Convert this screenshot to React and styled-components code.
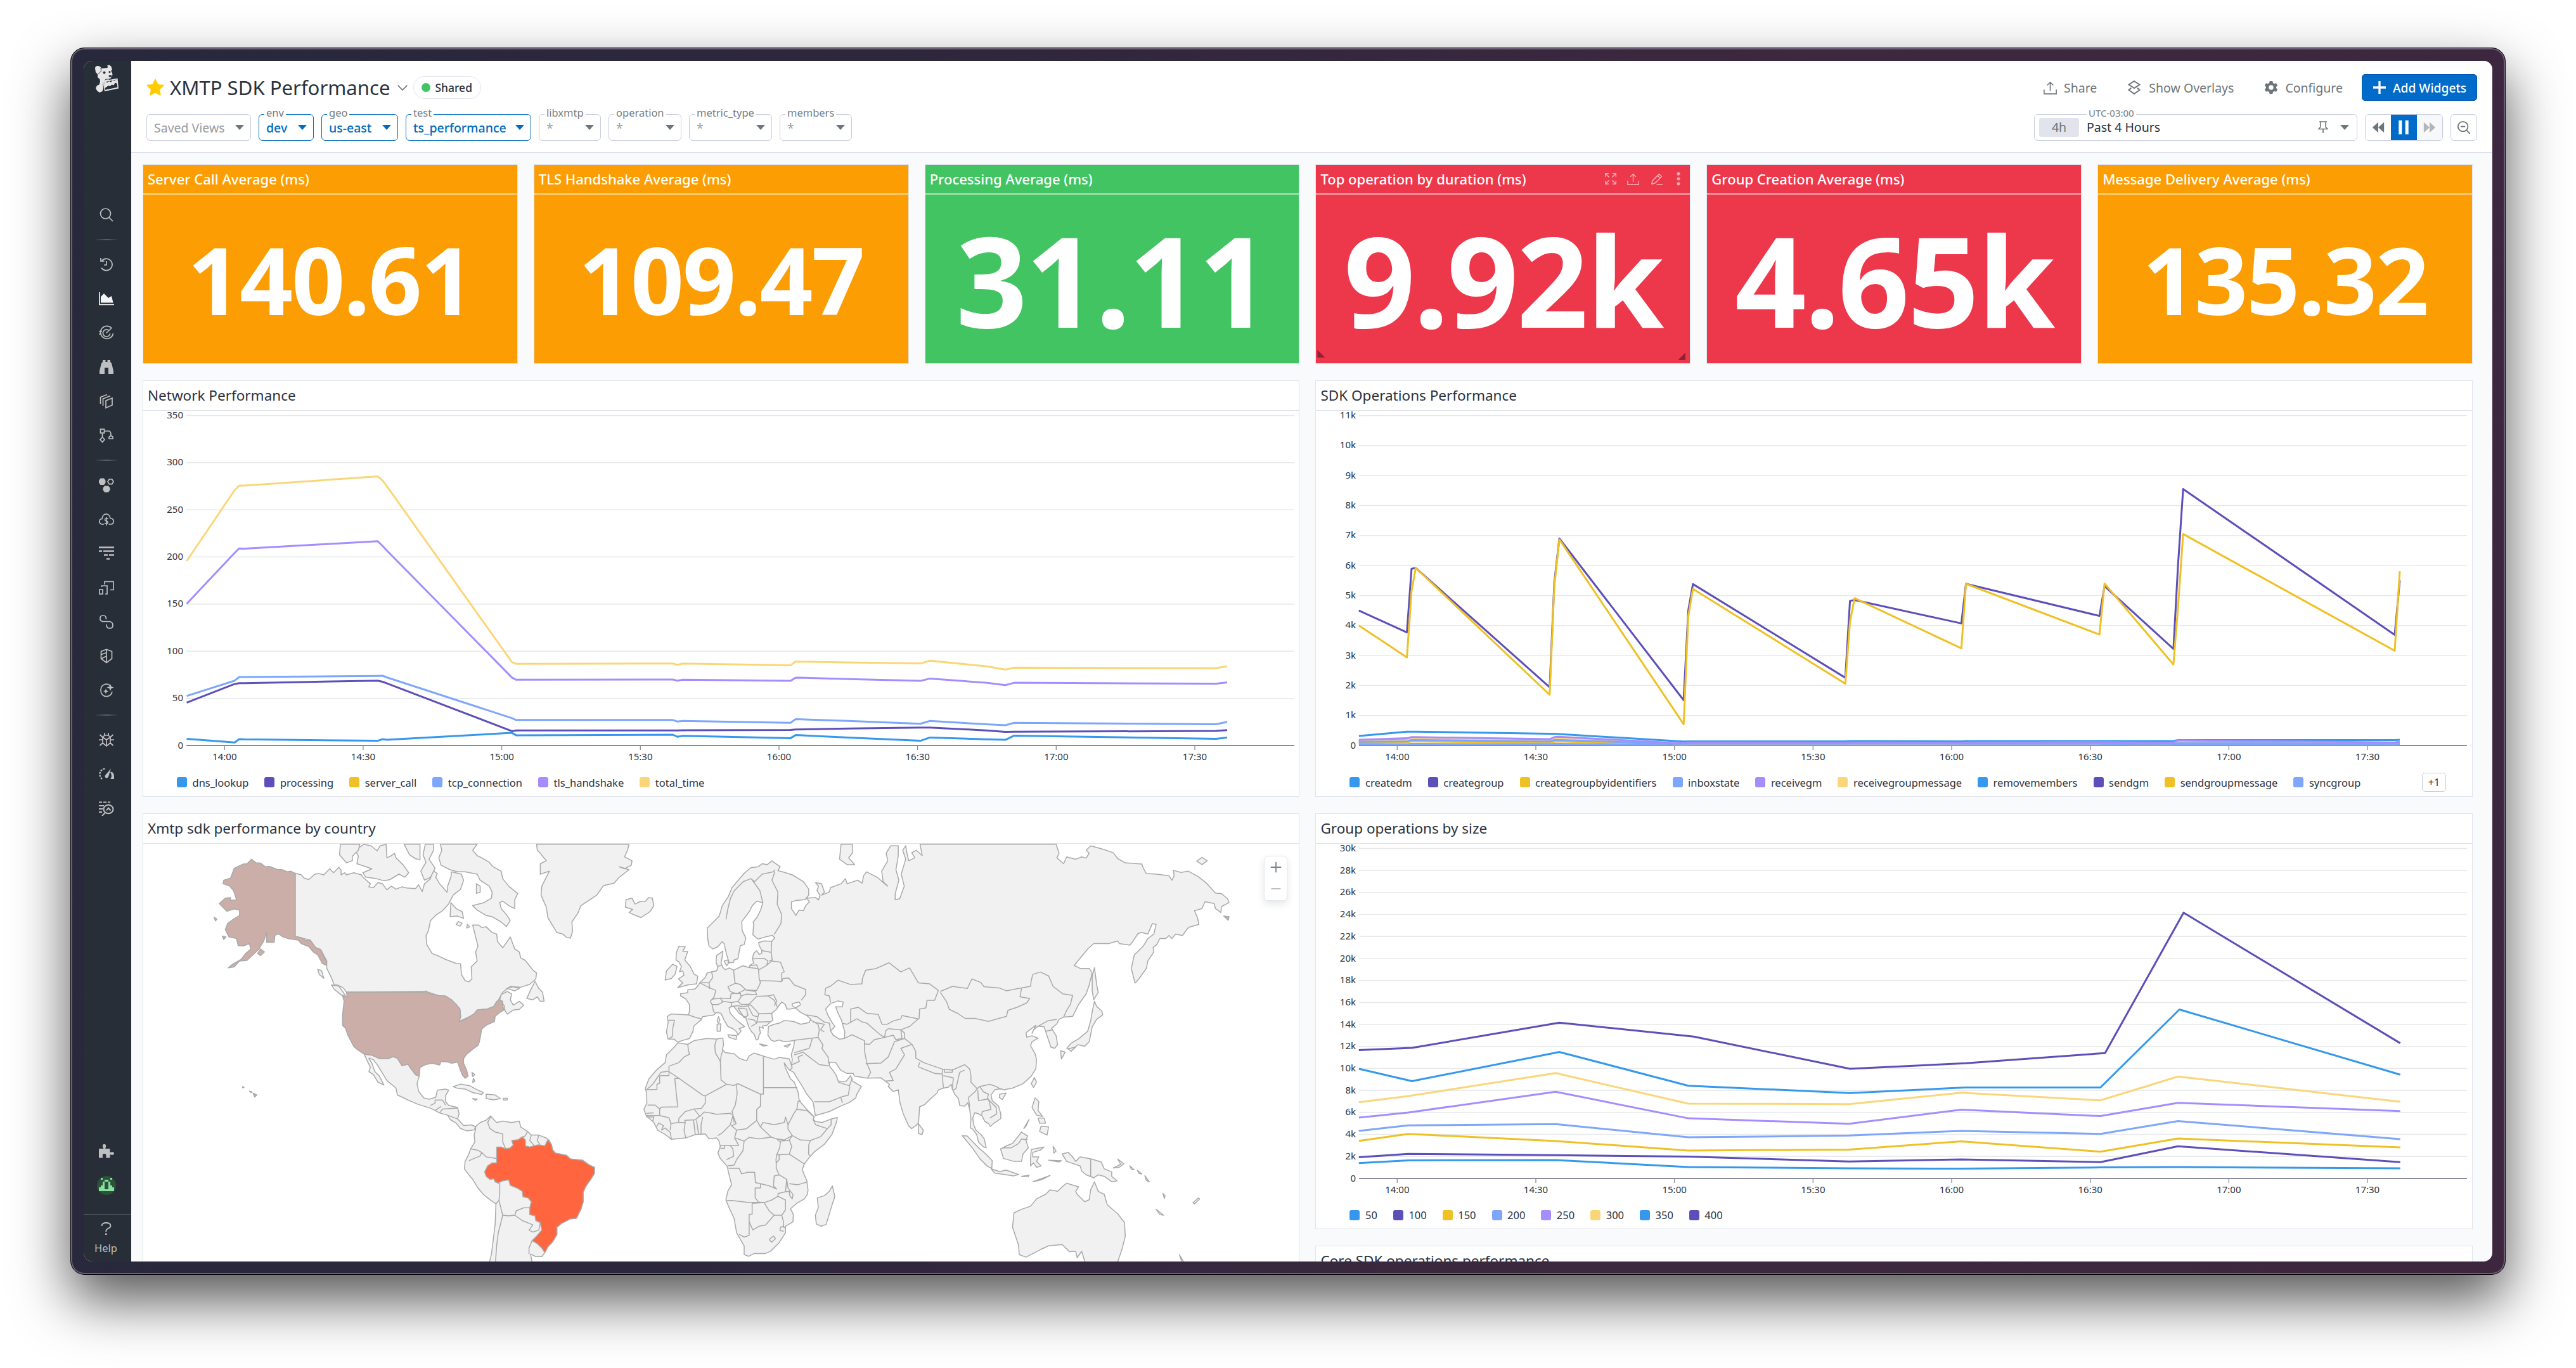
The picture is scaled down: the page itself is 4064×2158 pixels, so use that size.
import React from "react";
import styled, { createGlobalStyle } from "styled-components";

const Global = createGlobalStyle`
  html, body { margin: 0; padding: 0; background: #fff; }
  * { box-sizing: border-box; }
  body { font-family: "Noto Sans", "Open Sans", sans-serif; color: #2a323d; overflow: hidden; }
`;

/* ---------- shell ---------- */
const Desktop = styled.div`
  width: 4064px;
  height: 2158px;
  padding: 75px 111px 147px;
  background: #fff;
`;
const Bezel = styled.div`
  width: 3842px;
  height: 1936px;
  padding: 20px;
  border: 1px solid #050308;
  border-radius: 22px;
  background: linear-gradient(100deg, #28283c 0%, #2d273c 30%, #3c283f 65%, #3c273e 100%);
  box-shadow: inset 0 0 0 2px #6a6273, 0 40px 88px rgba(0, 0, 0, 0.67);
`;
const Screen = styled.div`
  display: grid;
  grid-template-columns: 75px 1fr;
  width: 3800px;
  height: 1894px;
  border-radius: 14px;
  overflow: hidden;
  background: #f9fafc;
`;

/* ---------- sidebar ---------- */
const Sidebar = styled.nav`
  display: flex;
  flex-direction: column;
  align-items: center;
  background: #282e38;
  color: #bdbfc0;
  padding-right: 3px;
`;
const LogoSlot = styled.div`
  height: 216px;
  padding-top: 6px;
`;
const NavItem = styled.div`
  height: 54px;
  width: 75px;
  display: flex;
  align-items: center;
  justify-content: center;
  color: ${(p) => (p.$active ? "#f4f4f4" : "inherit")};
`;
const NavRule = styled.div`
  width: 38px;
  height: 2px;
  margin: 11px 0;
  background: linear-gradient(90deg, transparent, #5b606a 50%, transparent);
`;
const Spacer = styled.div`
  flex: 1;
`;
const HelpBox = styled.div`
  width: 75px;
  margin-left: 3px;
  margin-top: 18px;
  height: 75px;
  border-top: 1px solid #575c65;
  padding: 12px 5px 0 0;
  display: flex;
  flex-direction: column;
  align-items: center;
  font-size: 16.5px;
  line-height: 22px;
`;
const HelpLabel = styled.span`
  margin-top: 10px;
`;

/* ---------- header ---------- */
const Main = styled.main`
  display: flex;
  flex-direction: column;
  min-width: 0;
  overflow: hidden;
`;
const Header = styled.header`
  flex: none;
  height: 145px;
  background: #fff;
  border-bottom: 1px solid #dcdfea;
  padding: 20px 24px 0;
  display: flex;
  flex-direction: column;
`;
const HeaderRow = styled.div`
  display: flex;
  align-items: center;
  height: ${(p) => p.$h}px;
  margin-top: ${(p) => p.$mt || 0}px;
`;
const Title = styled.h1`
  margin: 0 0 0 9px;
  font-size: 31.1px;
  font-weight: 400;
  line-height: 40px;
  white-space: nowrap;
`;
const ChevronSlot = styled.span`
  display: flex;
  margin-left: 12px;
`;
const Pill = styled.span`
  display: flex;
  align-items: center;
  gap: 7px;
  height: 36px;
  margin-left: 9px;
  padding: 0 13px 0 12px;
  border: 1px solid #e2e4ee;
  border-radius: 18px;
  font-size: 17.5px;
  font-weight: 500;
`;
const Dot = styled.i`
  width: 14px;
  height: 14px;
  border-radius: 50%;
  background: #42c463;
`;
const Ghost = styled.span`
  display: flex;
  align-items: center;
  gap: ${(p) => p.$gap || 11}px;
  margin-right: ${(p) => p.$mr}px;
  font-size: 19.5px;
  color: #6c757a;
  white-space: nowrap;
`;
const Primary = styled.span`
  display: flex;
  align-items: center;
  gap: 11px;
  width: 182px;
  height: 42px;
  padding-left: 17px;
  border: 1px solid #0259b5;
  border-radius: 5px;
  background: #006bc9;
  color: #fff;
  font-size: 19.2px;
  font-weight: 500;
  white-space: nowrap;
`;
const Filter = styled.div`
  position: relative;
  display: flex;
  align-items: center;
  justify-content: space-between;
  width: ${(p) => p.$w}px;
  height: 42px;
  margin-right: 12px;
  padding: 1px 10px 0 11px;
  border: 1px solid ${(p) => (p.$on ? "#006bc2" : "#c8cbe2")};
  border-radius: 6px;
  font-size: 19.5px;
  font-weight: ${(p) => (p.$on ? 500 : 400)};
  color: ${(p) => (p.$on ? "#006bc2" : "#979ba0")};
  white-space: nowrap;
`;
const Legendlet = styled.span`
  position: absolute;
  left: ${(p) => p.$x || 8}px;
  top: -14px;
  padding: 0 3px;
  background: #fff;
  color: #767d82;
  font-size: ${(p) => p.$s || 16.5}px;
  font-weight: 400;
  line-height: 22px;
`;
const Caret = styled.i`
  width: 0;
  height: 0;
  border: 7px solid transparent;
  border-bottom: 0;
  border-top: 8px solid ${(p) => p.$c || "#6c757a"};
`;
const TimeBox = styled.div`
  position: relative;
  display: flex;
  align-items: center;
  width: 510px;
  height: 42px;
  padding: 0 12px 0 7px;
  border: 1px solid #c8cbe2;
  border-radius: 6px;
  font-size: 19.5px;
`;
const PinSlot = styled.span`
  display: flex;
  margin-right: 19px;
`;
const Chip = styled.span`
  width: 63px;
  height: 30px;
  margin-right: 12px;
  border-radius: 4px;
  background: #e1e4ec;
  color: #6c757a;
  text-align: center;
  line-height: 30px;
`;
const Playback = styled.div`
  display: flex;
  width: 123px;
  height: 42px;
  margin: 0 12px;
  border: 1px solid #c8cbe2;
  border-radius: 6px;
  overflow: hidden;
`;
const PlayCell = styled.span`
  flex: 1;
  display: flex;
  align-items: center;
  justify-content: center;
  background: ${(p) => p.$bg || "#fff"};
  color: ${(p) => p.$c || "#6c757a"};
`;
const SquareButton = styled.span`
  display: flex;
  align-items: center;
  justify-content: center;
  width: 42px;
  height: 42px;
  border: 1px solid #c8cbe2;
  border-radius: 6px;
  color: #6c757a;
`;

/* ---------- board ---------- */
const Board = styled.section`
  display: grid;
  grid-template-columns: repeat(6, 1fr);
  grid-template-rows: 315px 656.5px 656.5px 656px;
  gap: 26px 25px;
  padding: 18px 31px 0 18px;
  height: 0;
`;
const Tile = styled.article`
  position: relative;
  display: flex;
  flex-direction: column;
  border: 1px solid #e1e4ee;
  background: ${(p) => p.$bg};
  color: #fff;
`;
const TileHead = styled.div`
  display: flex;
  align-items: center;
  justify-content: space-between;
  height: 47px;
  padding: 0 15px 1px 7px;
  border-bottom: 2px solid rgba(255, 255, 255, 0.6);
  font-size: 22px;
  font-weight: 500;
  white-space: nowrap;
`;
const TileTools = styled.span`
  display: flex;
  align-items: center;
  gap: 17.5px;
  color: #f9a9b2;
  > :last-child { margin-left: 5px; }
`;
const TileValue = styled.div`
  flex: 1;
  display: flex;
  align-items: center;
  justify-content: center;
  font-weight: 700;
  font-size: ${(p) => p.$size}px;
  letter-spacing: -0.0135em;
  line-height: 1;
`;
const Corner = styled.i`
  position: absolute;
  bottom: ${(p) => p.$b}px;
  left: ${(p) => (p.$left ? "2px" : "auto")};
  right: ${(p) => (p.$left ? "auto" : "7px")};
  width: 12px;
  height: 12px;
  background: #8f2035;
  clip-path: ${(p) => (p.$left ? "polygon(0 0, 100% 100%, 0 100%)" : "polygon(100% 0, 100% 100%, 0 100%)")};
`;
const Panel = styled.article`
  grid-column: span 3;
  grid-row: ${(p) => (p.$tall ? "span 2" : "auto")};
  position: relative;
  display: flex;
  flex-direction: column;
  min-width: 0;
  overflow: hidden;
  background: #fff;
  border: 1px solid #e1e4ec;
`;
const PanelHead = styled.h2`
  flex: none;
  margin: 0;
  height: 47px;
  padding: 0 7px;
  border-bottom: 1px solid #dfe2ea;
  font-size: 22.5px;
  font-weight: 400;
  line-height: 46px;
`;
const LegendRow = styled.div`
  display: flex;
  align-items: center;
  gap: 25px;
  margin-top: 10px;
  height: 30px;
  padding: 0 41px 0 53px;
  font-size: 16.5px;
  white-space: nowrap;
`;
const LegendItem = styled.span`
  display: flex;
  align-items: center;
  gap: 8.5px;
`;
const Swatch = styled.i`
  width: 16px;
  height: 16px;
  border-radius: 3px;
  background: ${(p) => p.$c};
`;
const More = styled.span`
  margin-left: auto;
  width: 38px;
  height: 30px;
  border: 1px solid #c8cbe2;
  border-radius: 5px;
  text-align: center;
  font-size: 16px;
  line-height: 28px;
`;
const ZoomBox = styled.div`
  position: absolute;
  top: 66px;
  right: 18px;
  width: 37px;
  height: 71px;
  border: 1px solid #e6e8f0;
  border-radius: 6px;
  background: #fff;
  box-shadow: 0 5px 12px rgba(40, 50, 80, 0.12);
  display: flex;
  flex-direction: column;
  align-items: center;
  justify-content: space-around;
  color: #7d8489;
`;
const PlotSvg = styled.svg`
  display: block;
  flex: none;
  overflow: visible;
`;

/* ---------- icons ---------- */
const IconSvg = styled.svg`
  display: block;
  flex: none;
`;
const Icon = ({ s = 24, sw = 1.7, children, vb = "0 0 24 24", w }) => (
  <IconSvg width={w || s} height={s} viewBox={vb} fill="none" stroke="currentColor" strokeWidth={sw}>
    {children}
  </IconSvg>
);
const solid = { fill: "currentColor", stroke: "none" };

const Logo = () => (
  <IconSvg width="38" height="44" viewBox="0 0 38 44" fill="#e6e6e6">
    <path d="M1 6 C1 3 3 1.5 6 2 C9 2.5 10 4 11 6 L20 5 L21.5 4 L20 1.5 L23.5 0.5 L26.5 3 L28 8.5 L26 9.5 C28 12 29 15 28 18 L25 22 L21 25 L16 25 L13 28 L13.5 33 L14 37 L12.5 42 L8 44 L4 41 L2 37 L4 33 L7.5 31.5 L9 27 L8.5 23 L5 20 L5 15 L2 12 Z" />
    <path fillRule="evenodd" d="M13 26 L36.5 21.5 L38 37.5 L16 42 Z M15.2 27.5 L17 39.8 L36.3 35.8 L35 23.5 Z" />
    <path d="M15.2 27.5 L18 26.8 L20 28.5 L23 26 L26 27.8 L29 24.5 L31 25.5 L35 23.5 L35.8 30 L32.5 28.5 L30.5 32.5 L27.5 31.5 L24.5 34 L22 33 L16.5 37Z" />
    <path d="M9.5 5 C12 9 9.5 13 6 14" stroke="#282e38" fill="none" strokeWidth="0.9" />
    <circle cx="15.5" cy="12.5" r="2" fill="#282e38" />
    <circle cx="24" cy="11.5" r="1.6" fill="#282e38" />
    <ellipse cx="25" cy="18" rx="2.6" ry="1.8" fill="#282e38" />
    <path d="M17 23.5 L24 22.5" stroke="#282e38" strokeWidth="0.9" />
  </IconSvg>
);

const icons = {
  search: <Icon><circle cx="10.5" cy="10" r="8" /><path d="M16 16 L22 22" /></Icon>,
  history: <Icon><path d="M4.5 6.5 A9.3 9.3 0 1 1 4 17.5" /><path d="M3 2 V7 H8.5 M12 7 V13 H8" /></Icon>,
  chart: <Icon><path d="M1 2 V21.5 H24" /><path {...solid} d="M3 18.5 V9 L8 4 L15 11 L20 8 L22.5 18.5 Z" /></Icon>,
  target: <Icon><path d="M20 4.5 A10 10 0 1 0 22.5 13" /><path d="M16 8.5 A5.6 5.6 0 1 0 17.6 13" /><path d="M11.5 12.5 L20 4.5 M0 9.5 H5 M0 14 H4" /></Icon>,
  binoc: <Icon><path {...solid} d="M6 1 H10.5 V4 H13.5 V1 H18 V4 L20 6 L23 18 V23 H15 V13 H9 V23 H1 V18 L4 6 L6 4Z" /></Icon>,
  stack: <Icon><path d="M11 11 L21 7 V18 L11 22.5Z" /><path d="M6.5 19 V8 L18 3.5 M2.5 16 V5.5 L13 1.5" /></Icon>,
  flow: <Icon><rect x="2.5" y="2" width="6" height="6" /><path d="M5.5 8 V15 M5.5 14.5 L9 18.5 L5.5 22.5 L2 18.5Z M8.5 5 H16 Q19 5 19 12" /><path d="M16 17 A3.2 3.2 0 1 1 22 17 Z" /></Icon>,
  hex: <Icon><path {...solid} d="M0 5 L2.5 1.5 H8 L10.5 5 V8.5 L8 12 H2.5 L0 8.5Z M6.5 16.5 L9 13.5 H15 L17.5 16.5 V20 L15 23.5 H9 L6.5 20Z" /><path d="M14 6.8 L16.3 3 H20.7 L23 6.8 L20.7 10.6 H16.3Z" /></Icon>,
  cloud: <Icon><path d="M8 20 H5 C-1 19 0 11.5 5 11.5 C5.5 2 16.5 1 18 10.5 C25 11 24.5 20 19 20 H15.5" /><path d="M14.5 11.5 C11 9.5 8.5 12 10 14 C12 15.5 15 15.5 14 18 C13 19.5 10 19 9 18 M11.8 8.8 V22" strokeWidth="1.6" /></Icon>,
  lines: <Icon sw="2.4"><path d="M0 2.5 H24 M0 8.5 H5 M7 8.5 H24 M8 14.5 H14 M16 14.5 H24 M12 20.5 H17" /></Icon>,
  boxes: <Icon><rect x="1" y="15" width="5" height="7" /><path d="M4.5 11 V9 H13 V22 H10 M9 7 V2.5 H23 V15.5 H18" /></Icon>,
  link: <Icon><path d="M9 11.5 H6 C0.5 10.5 0.5 2.5 6 2 H7.5 C11.5 2 11.5 7 11.5 8 M4.5 11.5 H17 C23.5 12.5 23.5 21.5 18 22 H16 C12 22 12 18 12 16" /></Icon>,
  shield: <Icon><path d="M3.5 4.5 L12 1.5 L20.5 4.5 V16 L12 22.5 L3.5 16Z M12 1.5 V22.5 M4 9.5 L12 6.5 M4 16 L12 12" /></Icon>,
  ai: <Icon><path d="M19 6 C13 -1 3 2.5 3 12 C3 24 19 25 21 14" /><path {...solid} d="M18 2 L19.5 6 L23.5 7.5 L19.5 9 L18 13 L16.5 9 L12.5 7.5 L16.5 6Z M11 9.5 L12.2 12.3 L15 13.5 L12.2 14.7 L11 17.5 L9.8 14.7 L7 13.5 L9.8 12.3Z" /></Icon>,
  bug: <Icon><path d="M6 8 L12 12 L18 8 M12 12 V22 M6 8 V17 L12 22 L18 17 V8 L15 5 H9Z M9 5 V1 M15 5 V1 M0 12 H6 M18 12 H24 M6 8 L1.5 4 M18 8 L22.5 4 M6 17 L1.5 21 M18 17 L22.5 21" /></Icon>,
  gauge: <Icon><path d="M5 20 C-2 13 2 4 11 3.5" strokeDasharray="3 1.6" strokeWidth="2.2" /><path {...solid} d="M10 14 L19 3.5 L15 16.5 C13 20 8 18 10 14Z M18 9 C22 8 24 12 24 16 V20 H18 C21 17 20 12 18 9Z" /></Icon>,
  logs: <Icon><path d="M0 2.5 H5 M7 2.5 H12 M14 2.5 H18 M0 8 H8 M0 13 H6 M0 18 H5" strokeWidth="2" /><ellipse cx="15" cy="13.5" rx="7.5" ry="6.8" strokeWidth="2" /><path d="M10 19 L5 24 M12 15.5 L15 11.5 L18.5 15.5" strokeWidth="2" /></Icon>,
  puzzle: <Icon><path {...solid} d="M0 8 H7.5 C5 3.5 5.5 1 8.5 1 C11.5 1 12 3.5 10 8 H17.5 V14 C21 12.5 24 13 24 15.5 C24 18 21 18.5 17.5 17 V22.5 H11 C12.5 18 11 16 8.5 16 C6 16 5 18 6.5 22.5 H0Z" /></Icon>,
};

const Avatar = () => (
  <IconSvg width="30" height="30" viewBox="0 0 30 30" shapeRendering="crispEdges">
    <circle cx="15" cy="15" r="15" fill="#2c5337" shapeRendering="auto" />
    <path fill="#86e0a0" d="M6 3h3v3H6z M21 3h3v3h-3z M12 6h6v3h3v6h3v3h3v6h-9v-3h-6v3H3v-6h3v-3h3V9h3z" />
    <path d="M12 9h6v12h-6z" fill="#2c5337" />
    <path d="M12 21h6v3h-6z" fill="#86e0a0" />
  </IconSvg>
);

const ShareIcon = ({ s }) => (
  <Icon s={s} sw="1.8"><path d="M1 15 V23 H23 V15 M12 18 V2 M6.5 7.5 L12 2 L17.5 7.5" /></Icon>
);

/* ---------- charts ---------- */
const C = { blue: "#3598ec", purple: "#5d4fba", gold: "#efc124", sky: "#7ea6fb", lilac: "#a58dff", sand: "#fbd679" };
const CHART_W = 1823;
const X0 = 68;
const X1 = 1816;
const Y_TOP = 7.5;
const Y_BASE = 528;
const TIMES = ["14:00", "14:30", "15:00", "15:30", "16:00", "16:30", "17:00", "17:30"];

function Chart({ ticks, max, series, label }) {
  const x = (m) => 128.3 + m * 7.289;
  const y = (v) => Y_BASE - (v / max) * (Y_BASE - Y_TOP);
  return (
    <PlotSvg width={CHART_W} height="561" viewBox={`0 0 ${CHART_W} 561`}>
      {ticks.map((t) => (
        <g key={t}>
          {t > 0 && <line x1={X0} x2={X1} y1={y(t)} y2={y(t)} stroke="#e7e8ea" strokeWidth="1.5" />}
          <text x="63" y={y(t) + 4.5} fontSize="15" textAnchor="end" fill="#2a323d">{label(t)}</text>
        </g>
      ))}
      <line x1={X0} x2={X1} y1={Y_BASE} y2={Y_BASE} stroke="#8a8c9b" strokeWidth="2" />
      {TIMES.map((t, i) => (
        <g key={t}>
          <line x1={x(i * 30)} x2={x(i * 30)} y1={Y_BASE} y2={Y_BASE + 7} stroke="#8a8c9b" strokeWidth="1.3" />
          <text x={x(i * 30)} y={Y_BASE + 23} fontSize="15" textAnchor="middle" fill="#2a323d">{t}</text>
        </g>
      ))}
      {series.map(([color, pts], i) => (
        <polyline key={i} fill="none" stroke={color} strokeWidth="3" strokeLinejoin="round" points={pts.map(([m, v]) => `${x(m).toFixed(1)},${y(v).toFixed(1)}`).join(" ")} />
      ))}
    </PlotSvg>
  );
}

const zip = (ms, vs) => ms.map((m, i) => [m, vs[i]]);
const NM = [-8.2, 2.2, 3.15, 4.3, 33.15, 34.2, 35.1, 62.2, 63.1, 97, 98, 99.2, 122.5, 123.6, 135, 150.6, 152.7, 164.8, 169, 170.9, 214.6, 217];
const network = [
  [C.sand, zip(NM, [195.7, 271, 275.6, 275.6, 285.5, 281, 275.3, 88.4, 86.6, 86.9, 85.5, 86.9, 85, 89, 88, 87, 90, 84, 80.5, 82.5, 82, 84])],
  [C.lilac, zip(NM, [150.3, 204.4, 209, 208.8, 216.7, 211.7, 207, 72, 69.7, 70, 68.8, 69.7, 68.5, 72, 70.5, 68.5, 71, 66.5, 64, 66.5, 65.5, 67])],
  [C.sky, zip(NM, [52.5, 68.8, 72.6, 72.6, 73.8, 74, 72.3, 29, 27, 27, 25.4, 26, 24, 28, 26, 23, 26, 22.5, 21.5, 24, 22.5, 25])],
  [C.purple, zip(NM, [45.5, 65.3, 66, 66.1, 68.8, 67.6, 66, 15.2, 16, 16, 16, 16.2, 16.5, 17, 18, 19, 19, 16, 14.5, 14.6, 15.4, 16.3])],
  [C.blue, zip(NM, [7, 3.2, 6.7, 6.5, 5, 6.7, 6.1, 13.4, 10.8, 11.4, 9.3, 10.2, 7.8, 11, 8.5, 5, 8.5, 6.5, 6, 10.5, 7, 8.5])],
];

const SM = [-8.3, 2.1, 3.1, 4, 33, 34, 35.1, 62, 63, 64, 97, 98, 99, 122.1, 123.1, 152, 153.1, 168, 169, 170.1, 215.9, 217];
const sdk = [
  [C.gold, zip(SM, [0.09, 0.11, 0.13, 0.13, 0.09, 0.12, 0.13, 0.02, 0.03, 0.04, 0.03, 0.03, 0.04, 0.03, 0.04, 0.04, 0.04, 0.03, 0.05, 0.05, 0.04, 0.05])],
  [C.sky, zip(SM, [0.04, 0.04, 0.05, 0.05, 0.04, 0.05, 0.05, 0.02, 0.03, 0.03, 0.03, 0.03, 0.03, 0.03, 0.03, 0.03, 0.03, 0.02, 0.03, 0.03, 0.03, 0.04])],
  [C.purple, zip(SM, [0.16, 0.2, 0.22, 0.22, 0.17, 0.2, 0.21, 0.05, 0.07, 0.07, 0.07, 0.07, 0.08, 0.07, 0.08, 0.08, 0.08, 0.06, 0.1, 0.1, 0.08, 0.1])],
  [C.sand, zip(SM, [0.15, 0.18, 0.22, 0.23, 0.16, 0.22, 0.23, 0.05, 0.06, 0.07, 0.06, 0.06, 0.07, 0.06, 0.07, 0.07, 0.08, 0.06, 0.13, 0.14, 0.07, 0.1])],
  [C.sky, zip(SM, [0.12, 0.14, 0.18, 0.18, 0.13, 0.18, 0.18, 0.05, 0.06, 0.07, 0.06, 0.06, 0.07, 0.06, 0.07, 0.07, 0.07, 0.05, 0.08, 0.08, 0.06, 0.08])],
  [C.blue, zip(SM, [0.32, 0.46, 0.46, 0.46, 0.39, 0.39, 0.38, 0.13, 0.14, 0.14, 0.14, 0.15, 0.15, 0.14, 0.15, 0.15, 0.15, 0.15, 0.18, 0.18, 0.18, 0.19])],
  [C.lilac, zip(SM, [0.19, 0.24, 0.28, 0.28, 0.21, 0.28, 0.29, 0.07, 0.1, 0.1, 0.09, 0.1, 0.1, 0.09, 0.1, 0.11, 0.11, 0.09, 0.17, 0.17, 0.1, 0.13])],
  [C.purple, zip(SM, [4.5, 3.77, 5.89, 5.92, 1.94, 5.42, 6.9, 1.51, 4.5, 5.38, 2.26, 4.82, 4.85, 4.07, 5.39, 4.32, 5.31, 3.22, 6, 8.55, 3.69, 5.51])],
  [C.gold, zip(SM, [4.0, 2.94, 5.14, 5.92, 1.69, 5.3, 6.87, 0.71, 4.3, 5.22, 2.06, 4.13, 4.91, 3.24, 5.39, 3.7, 5.4, 2.7, 4.6, 7.05, 3.16, 5.81])],
];

const GM = [-8.3, 2.4, 34.3, 63, 97.8, 122.1, 152.2, 169, 217.1];
const GL = [-8.3, 3.2, 35.1, 64.2, 98, 123, 153.2, 170.2, 217.1];
const GB = [-8.3, 3.2, 35.1, 63, 98, 123, 152.2, 169.3, 217.1];
const groups = [
  [C.blue, zip(GM, [1.4, 1.65, 1.68, 1.03, 0.92, 0.89, 1, 1.03, 0.92])],
  [C.purple, zip(GM, [1.93, 2.23, 2.12, 1.98, 1.54, 1.73, 1.48, 2.93, 1.48])],
  [C.gold, zip(GM, [3.41, 4.05, 3.4, 2.54, 2.63, 3.38, 2.43, 3.63, 2.82])],
  [C.sky, zip(GM, [4.33, 4.83, 4.94, 3.74, 3.9, 4.33, 4.05, 5.22, 3.58])],
  [C.lilac, zip(GM, [5.53, 6, 7.88, 5.47, 4.97, 6.26, 5.67, 6.87, 6.12])],
  [C.sand, zip(GM, [6.93, 7.49, 9.58, 6.8, 6.76, 7.8, 7.1, 9.27, 6.98])],
  [C.blue, zip(GB, [9.97, 8.85, 11.5, 8.43, 7.77, 8.27, 8.27, 15.36, 9.44])],
  [C.purple, zip(GL, [11.68, 11.87, 14.16, 12.9, 9.97, 10.47, 11.4, 24.16, 12.3])],
];

/* ---------- map ---------- */
const pts = (str, ox, oy, kx, ky) =>
  str.trim().split(/\s+/).map((p) => {
    const [px, py] = p.split(",").map(Number);
    return `${(ox + px * kx).toFixed(1)},${(oy + py * ky).toFixed(1)}`;
  });
/* wide sheet (whole world) and detail sheet (Europe, Africa, South Asia) */
const W = (s) => pts(s, -26, -60.5, 1.18622, 0.47192);
const D = (s) => pts(s, 774, 119.5, 0.39541, 0.34436);
const ring = (...parts) => parts.flat().join(" ");

const eurasia = ring(
  W("772,410 780,390 788,370 792,335 800,305 805,275 815,245 822,225 830,208 840,205 845,195 852,198 858,185 866,200 869,205 866,218 872,222 885,232 900,255 907,280 907,300 902,315 890,318 884,322 884,345 890,368 894,350 900,352 903,335 908,322 904,310 916,308 920,316 922,300 918,285 920,270 916,258 924,262 928,290 924,300 934,290 936,275 950,262 956,245 958,262 972,250 978,260 980,235 984,222 998,240 1008,262 1012,270 1006,255 1004,220 1012,185 1010,160 1016,135 1026,135 1026,170 1023,215 1027,250 1022,295 1022,315 1028,312 1034,270 1030,230 1036,180 1032,150 1036,135 1038,165 1040,185 1048,175 1044,158 1050,150 1058,168 1055,130 1236,130 1240,160 1237,175 1246,195 1250,172 1262,180 1270,172 1276,176 1280,160 1276,150 1282,135 1300,148 1312,158 1318,178 1328,192 1350,196 1352,210 1356,228 1370,230 1386,235 1390,250 1393,235 1392,217 1402,224 1412,220 1425,238 1436,260 1448,293 1456,295 1464,312 1466,325 1456,338 1455,358 1448,345 1446,328 1434,322 1430,345 1420,352 1424,375 1426,398 1412,408 1404,435 1395,430 1390,445 1386,435 1382,445 1374,445 1370,465 1365,475 1366,490 1358,520 1356,545 1346,580 1341,594 1336,545 1340,500 1352,470 1358,445 1366,430 1369,398 1364,395 1358,430 1350,425 1345,428 1338,455 1334,467 1320,462 1318,453 1306,462 1286,462 1278,480 1260,535 1268,545 1280,545 1284,560 1280,600 1276,630 1266,665 1258,705 1246,708 1240,715 1237,730 1230,745 1236,770 1238,800 1234,812 1229,808 1226,785 1224,770 1222,755 1220,740 1212,738 1206,750 1204,762 1209,735 1196,760 1197,775 1204,770 1212,778 1204,790 1202,803 1208,830 1210,850 1209,880 1203,905 1192,930 1178,945 1168,950"),
  D("1480,782 1465,775 1440,780 1425,805 1430,830 1455,855 1464,890 1464,912 1440,930 1422,948 1416,935 1400,925 1390,900 1375,890 1360,885 1352,910 1356,940 1365,965 1385,985 1398,1005 1406,1045 1395,1042 1375,1020 1368,985 1352,960 1342,955 1345,915 1340,870 1332,840 1320,855 1300,852 1295,820 1280,800 1272,780 1266,755 1255,768 1238,772 1215,780 1210,795 1180,825 1160,848 1140,858 1136,930 1125,945 1108,958 1096,945 1075,890 1062,840 1055,780 1035,788 1015,765 1020,755 1003,740 985,725 930,727 880,717 875,705 850,705 825,690 805,655 780,653 780,670 800,700 808,715 815,740 835,742 848,740 865,715 872,740 908,765 890,800 885,818 860,838 825,855 780,880 724,898 720,870 715,835 690,800 670,760 650,725 638,700 622,690 628,680 632,640 628,620 638,580 641,553 625,557 600,560 580,552 560,558 548,553 535,530 537,490 560,480 580,475 600,463 620,465 640,468 665,480 700,472 705,455 690,440 665,425 645,405 625,410 610,410 605,390 590,378 575,400 570,410 550,430 552,450 555,462 545,468 530,485 513,488 517,498 500,492 505,520 500,530 495,550 488,552 480,525 470,515 460,495 452,470 447,450 420,430 400,400 390,398 380,405 385,430 405,455 425,475 442,490 432,495 420,500 428,510 415,530 410,515 395,500 375,490 360,460 348,430 330,425 320,437 275,445 268,460 240,487 235,515 222,545 200,552 175,562 160,548 136,547 130,515 137,470 133,445 148,433 218,437 222,420 222,390 208,365 187,350 186,340 215,335 215,322 245,318 258,300 263,290 285,265 292,245 310,240 330,235 335,220 328,195 330,165 355,145 352,175 348,200 355,220 365,230 380,222 398,232 435,212 460,220 465,208 478,200 473,180 478,155 490,143 500,160 510,155 510,140 500,120 498,105 520,98 550,100 562,85 553,73 530,78 495,90 475,70 478,20"),
  W("833,390 838,375 843,350 846,325 838,320 832,335 828,355 818,388"),
  D("432,50 447,85 440,115 425,120 418,160 415,180 400,185 397,197 380,198 370,160 360,110 352,102 335,125 315,135 300,122 295,90")
);

const LANDS = [
  ring(W("224,227 232,232 236,243 242,248 250,230 256,228 262,232 270,212 275,225 282,207 285,216 285,232 290,225 292,232 302,225 312,232 314,240 324,262 322,272 328,275 334,258 340,262 346,282 352,270 358,280 366,272 372,276 384,278 388,265 393,288 396,262 404,245 406,215 413,228 411,240 416,262 426,290 427,268 431,240 432,222 445,230 448,250 444,280 434,300 428,330 420,352 412,365 404,385 401,420 398,435 399,465 406,495 416,505 424,515 438,528 444,530 445,565 450,586 455,590 459,580 458,540 466,520 464,490 467,470 463,430 460,400 468,400 472,408 478,406 486,425 492,430 493,455 500,476 506,455 510,440 516,480 522,490 524,510 530,518 540,550 545,560 544,580 536,598 524,608 510,605 500,625 494,652 488,672 480,680 466,684 462,697 456,706 442,722 444,706 443,680 432,650 415,636 398,622 292,624 288,610 280,600 276,600 272,575 266,545 266,520 258,482 251,475 244,450 224,438")),
  ring(W("496,650 498,632 506,622 512,630 510,650 514,668 522,655 528,668 522,682 514,684 506,698 503,686 502,670")),
  ring(W("505,612 514,606 522,612 516,620")),
  ring(W("543,588 548,612 553,625 555,655 550,655 546,640 540,650 532,645 537,618")),
  ring(W("272,600 282,604 288,625 292,642 286,635 276,615")),
  ring(W("254,548 259,552 262,578 256,565")),
  ring(W("315,130 325,135 333,152 337,135 345,130 346,175 352,168 356,160 358,175 368,200 375,225 370,240 362,230 350,248 342,252 332,245 318,240 314,225 326,212 318,205 306,195 308,170 304,150")),
  ring(W("284,130 310,130 308,150 300,170 300,185 292,192 283,165")),
  ring(W("369,130 376,165 384,178 390,182 390,130")),
  ring(W("397,130 408,130 408,150 402,180 410,210 404,240 396,250 391,220 398,190 394,165")),
  ring(W("417,130 466,130 460,150 466,168 472,175 482,190 487,205 498,220 500,245 508,270 520,295 516,315 516,345 508,335 500,320 496,325 498,345 505,365 510,385 505,405 498,390 486,372 478,368 466,350 460,335 475,325 485,310 486,290 482,270 470,250 466,230 450,222 440,222 430,215 418,200 415,175 419,150")),
  ring(W("431,325 438,345 446,355 448,378 440,370 430,372")),
  ring(W("465,262 470,270 470,290 465,294")),
  ring(W("441,388 446,394 443,404 438,398")),
  ring(W("453,398 456,406 452,410")),
  ring(W("545,130 668,130 666,150 662,172 672,185 671,200 662,212 655,205 668,215 655,240 648,260 634,268 625,300 604,335 600,360 592,390 593,420 590,444 584,440 580,430 572,425 566,400 560,375 558,340 551,300 552,270 558,240 562,220 550,230 550,195 558,185 553,170 550,160 546,150")),
  ring(W("664,315 672,310 676,330 682,322 690,320 694,308 699,310 701,335 696,355 684,375 674,365 668,358 673,348 663,340")),
  ring(W("316,832 326,835 336,846 348,846 354,840 360,845 366,870 374,865 378,880 384,900 389,905 386,930 388,955 395,978 402,982 411,976 413,952 424,948 428,952 424,970 424,990 428,1003 440,1010 442,1030 440,1048 448,1070 458,1068 464,1074 462,1085 452,1088 444,1080 438,1062 430,1050 427,1036 416,1028 404,1012 388,1000 374,985 360,968 358,945 346,920 340,895 334,870 328,850 322,845 326,862 330,890 336,905 342,935 334,925 328,900 322,890 324,875 319,850")),
  ring(W("434,940 444,932 456,937 464,948 474,960 472,966 460,960 450,948 440,946")),
  ring(W("478,965 490,968 497,980 488,984 478,980")),
  ring(W("501,979 506,979 506,985 501,985")),
  ring(W("460,980 466,982 464,986")),
  ring(W("459,892 463,900 460,906")),
  ring(W("461,912 463,922 460,926")),
  ring(W("464,1074 470,1060 478,1052 484,1038 488,1050 492,1060 500,1055 512,1060 522,1055 524,1075 533,1090 538,1102 548,1102 558,1112 562,1120 565,1135 566,1150 570,1162 585,1170 590,1182 606,1186 615,1202 622,1210 622,1230 617,1250 610,1275 607,1295 607,1325 604,1350 598,1380 590,1382 578,1398 572,1410 572,1435 566,1460 560,1475 556,1495 552,1508 544,1508 537,1500 540,1540 481,1540 485,1500 487,1460 490,1400 491,1332 484,1320 474,1300 466,1275 460,1250 455,1235 449,1215 450,1190 455,1165 457,1150 463,1125 462,1100 464,1085")),
  eurasia,
  ring(D("175,565 215,572 240,555 290,545 330,547 355,543 358,575 353,595 365,610 400,615 420,635 450,648 460,625 480,612 515,625 535,632 560,640 580,632 620,638 632,680 620,690 600,657 605,680 625,730 640,745 655,790 660,830 690,870 720,905 715,915 725,925 750,930 785,915 812,907 808,930 790,985 760,1030 720,1065 700,1090 680,1120 672,1145 680,1170 690,1195 695,1240 692,1260 680,1280 650,1300 625,1325 636,1350 635,1385 605,1405 605,1435 580,1480 545,1520 525,1530 480,1530 458,1543 440,1535 440,1495 410,1435 400,1370 380,1320 367,1285 375,1245 390,1215 380,1170 372,1130 345,1095 335,1070 345,1040 340,1015 330,1000 300,1005 285,982 245,985 210,1000 150,1007 125,985 95,965 80,930 50,900 40,870 52,840 50,790 45,775 60,730 90,690 125,655 130,620 165,580")),
  ring(D("792,1220 802,1270 790,1310 767,1397 747,1405 728,1395 724,1355 736,1320 732,1275 760,1265 780,1245")),
  ring(D("180,122 205,125 195,145 215,147 203,185 225,215 240,250 255,260 250,295 215,300 175,312 195,290 178,272 200,255 195,235 182,240 190,215 180,195 168,185 170,150")),
  ring(D("155,205 172,215 165,250 150,270 125,277 130,235")),
  ring(D("338,445 343,460 338,475 332,465")),
  ring(D("332,480 347,478 345,512 332,512")),
  ring(D("375,528 410,532 408,550 380,540")),
  ring(D("502,570 532,577 515,580")),
  ring(D("600,580 625,570 612,585")),
  ring(D("360,190 375,185 378,200 370,212")),
  ring(D("1135,935 1155,965 1150,985 1135,980")),
  ring(D("1460,800 1485,795 1470,825 1458,815")),
  ring(D("1310,990 1330,992 1375,1045 1405,1075 1430,1105 1428,1140 1410,1130 1380,1095 1350,1045")),
  ring(D("1425,1142 1460,1155 1485,1148 1535,1168 1515,1175 1440,1162")),
  ring(W("1190,1092 1198,1105 1196,1120 1199,1145 1192,1165 1190,1190 1180,1190 1166,1180 1162,1148 1170,1138 1178,1130")),
  ring(W("1207,910 1210,925 1206,943 1203,930")),
  ring(W("1287,543 1290,600 1292,625 1286,650 1284,620 1284,570")),
  ring(W("1287,655 1290,672 1297,688 1298,700 1290,715 1284,740 1280,790 1274,805 1265,800 1258,815 1250,812 1256,795 1266,780 1278,755 1282,720 1284,690")),
  ring(W("1242,820 1248,825 1243,848")),
  ring(W("1252,814 1262,808 1256,822")),
  ring(W("1208,978 1213,990 1212,1020 1218,1040 1210,1035 1204,1010")),
  ring(W("1216,1072 1226,1075 1224,1102 1214,1090")),
  ring(W("1212,1045 1220,1045 1222,1062 1214,1062")),
  ring(W("1200,1050 1196,1072 1193,1080")),
  ring(W("1203,1150 1220,1142 1215,1152 1205,1160 1205,1175 1213,1175 1210,1190 1216,1205 1210,1210 1206,1195 1202,1205 1202,1180")),
  ring(W("1244,1165 1252,1160 1258,1175 1262,1190 1268,1175 1283,1182 1296,1192 1300,1215 1310,1225 1310,1240 1317,1255 1310,1258 1300,1240 1292,1235 1286,1245 1276,1235 1270,1222 1268,1205 1250,1190")),
  ring(W("1318,1182 1326,1198 1320,1210 1312,1212 1322,1200")),
  ring(W("1334,1205 1340,1218 1336,1216")),
  ring(W("1344,1220 1350,1232 1346,1230")),
  ring(W("1354,1238 1360,1258 1356,1254")),
  ring(W("1205,1258 1228,1237 1216,1252")),
  ring(W("1190,1240 1200,1236 1199,1242")),
  ring(W("1232,1140 1236,1155 1233,1162")),
  ring(W("1226,1186 1243,1188 1240,1192")),
  ring(W("1378,1297 1381,1305 1380,1314")),
  ring(W("1369,1350 1379,1370 1374,1368")),
  ring(W("1425,1312 1427,1316 1420,1332 1418,1328")),
  ring(W("1250,1263 1266,1275 1262,1290 1264,1300 1274,1325 1280,1318 1282,1285 1287,1258 1292,1290 1300,1300 1304,1335 1318,1365 1327,1395 1328,1440 1324,1480 1316,1540 1276,1540 1270,1490 1264,1512 1262,1490 1254,1492 1244,1468 1226,1472 1215,1485 1196,1510 1187,1502 1186,1470 1178,1410 1180,1362 1190,1350 1202,1340 1210,1315 1222,1300 1228,1285 1238,1290 1244,1275")),
  ring(W("1400,1502 1405,1540 1409,1540")),
  ring(W("950,130 965,130 965,160 960,175 968,198 958,198 948,180")),
  ring(W("1430,174 1437,185 1430,198 1423,186")),
];
const SEAS = [
  ring(D("632,385 660,378 665,390 645,405 632,395")),
  ring(D("785,385 815,373 835,378 832,400 805,400 815,430 828,460 835,490 842,515 840,545 820,548 795,530 785,510 802,490 790,470 775,440 765,410")),
];
const USA = [
  ring(W("166,180 172,192 178,193 184,205 190,204 200,214 207,215 213,222 218,220 224,227 224,438 232,442 238,452 244,450 251,475 258,482 262,508 266,520 265,534 260,528 254,500 248,490 242,472 232,462 228,450 216,446 208,440 202,430 197,434 196,458 186,458 186,424 182,455 178,470 176,480 160,518 150,520 143,540 135,543 140,532 152,515 158,495 165,480 163,462 155,470 148,468 146,445 136,440 131,415 134,395 142,380 150,368 150,350 143,346 133,354 123,328 131,310 138,308 138,318 146,316 142,285 137,270 128,262 129,250 138,243 143,210 155,196 160,195")),
  ring(W("292,624 396,624 398,620 400,628 408,632 415,636 424,637 432,650 438,665 443,680 444,706 442,722 450,716 456,706 462,697 466,684 480,680 488,672 492,655 496,650 500,655 500,670 502,684 496,692 490,705 489,722 478,735 472,748 470,778 469,790 467,803 460,815 452,832 448,846 448,862 452,885 454,905 450,912 446,900 443,880 440,858 432,862 426,857 418,856 416,868 406,862 398,866 390,876 389,905 384,900 378,880 374,865 366,870 360,845 354,840 348,846 336,846 326,835 316,832 306,815 302,806 294,768 291,745 287,735 287,700 289,655 287,635 293,640")),
  ring(W("178,480 183,490 178,502 174,495")),
  ring(W("127,437 132,440 129,448")),
  ring(W("116,374 120,380 118,386")),
  ring(W("168,962 173,968 170,975")),
  ring(W("163,955 167,958 165,960")),
  ring(W("154,940 156,942 154,944")),
  ring(W("1459,370 1466,372 1465,384")),
];
const BRAZIL = ring(W("498,1142 504,1148 510,1145 514,1135 512,1120 520,1118 526,1108 530,1118 530,1138 536,1142 546,1135 556,1138 560,1118 565,1135 566,1150 570,1162 585,1170 590,1182 606,1186 615,1202 622,1210 622,1230 617,1250 610,1275 607,1295 607,1325 604,1350 598,1380 590,1382 578,1398 572,1410 572,1435 566,1460 560,1475 556,1495 552,1480 546,1465 539,1455 545,1440 552,1420 550,1395 544,1388 543,1372 536,1368 536,1345 538,1325 534,1312 527,1308 526,1290 520,1280 510,1270 508,1252 500,1255 494,1262 490,1258 488,1248 483,1250 478,1240 476,1225 480,1205 486,1195 492,1195 492,1160 492,1142"));

const WIDE_BORDERS = `484,1040 480,1060 483,1080 490,1092 500,1098 500,1125 504,1148|533,1090 530,1105 526,1108|538,1102 536,1120 542,1138|548,1102 546,1120 550,1136|457,1148 466,1152 472,1160 478,1175 492,1180|455,1188 462,1180 470,1172 472,1160|490,1258 496,1265 496,1300 495,1320 491,1332|495,1320 498,1350 500,1370 508,1372 516,1370 518,1355 528,1345 536,1345|516,1370 526,1388 540,1402 535,1420 540,1426 548,1420 550,1395|500,1370 497,1400 494,1430 492,1470 490,1540|539,1455 535,1480 535,1500|404,1003 410,995 410,985 420,985 424,1002|416,1028 420,1015 440,1012|427,1036 440,1048|410,1020 418,1006|797,381 799,350 803,310 808,285 820,255 830,245 835,255 845,230 860,222 862,215|832,250 842,285 846,325|862,222 858,250 866,290 865,330 871,365 870,395 861,432|1082,622 1098,605 1118,612 1124,580 1136,592 1140,606 1160,610 1170,620 1186,612 1202,605 1203,585 1205,565 1215,557 1226,570 1232,605 1245,630 1258,635 1255,665 1250,685 1246,708|1190,612 1188,640 1201,645 1197,660 1184,675 1172,685 1170,705 1160,712 1146,722 1128,712 1115,712 1105,695 1094,682 1090,655 1082,625|1212,738 1225,720 1237,715|1222,755 1232,750|1282,1182 1282,1242|1164,1145 1176,1145 1186,1130 1190,1115 1198,1118`;
const DETAIL_BORDERS = `215,572 218,600 222,617 200,630 180,655 140,672 140,715 105,715|140,695 108,700 75,755 50,780 92,778 92,755 103,750 103,715|140,697 180,728 163,728 175,858 110,860 103,868 85,850 55,850|180,728 275,805 285,808 370,755 348,735 345,650 325,610 323,575 330,548|355,600 348,625 345,650|370,755 400,760 415,752 505,800 517,800 517,627|517,770 652,770|505,800 505,855 490,870 490,920 505,950|410,757 412,800 405,850 392,880 395,890|285,808 285,840 270,865 240,868|240,868 205,880 180,910 178,930 205,930 203,920 245,918 262,900 240,868|103,868 103,898 140,908 148,935 175,930|50,898 103,898|75,925 80,905 50,905|50,888 80,886|148,935 145,965|110,965 125,955 145,975 150,1007|90,950 100,932 118,945 110,965|205,930 200,965 207,1000|238,918 245,985|250,920 258,983|275,905 268,940 268,982|262,905 280,882 300,885 330,892 385,888 395,895 400,930|395,900 385,940 355,975 335,990|395,895 408,935 390,945 410,965 402,1000 418,1035 345,1035|410,965 450,958 490,920|402,1000 440,1015 460,998 500,1005 548,997 505,950|505,950 515,930 560,940 600,930 605,905 615,940 615,960 632,990 600,1010 570,1005 548,997|615,940 640,885 650,870 690,875 720,905|650,870 655,835 665,828|715,915 725,940 772,958 745,995 705,1012 665,1010 632,990|772,958 787,940 787,915|632,990 620,1010 630,1040 620,1075 680,1120|705,1012 698,1030 697,1075 705,1085|570,1005 585,1020 582,1045 570,1078 620,1075|585,1015 620,1012|570,1078 567,1100 568,1115 580,1100 580,1078|568,1115 568,1140 580,1170 560,1175 557,1220 570,1235 540,1220 505,1210 485,1205 482,1158 455,1158 430,1165 420,1140 378,1140|440,1015 435,1060 410,1100 400,1125 375,1128|345,1048 362,1048 362,1035|385,1037 395,1050 398,1085 370,1100|505,1210 505,1230 484,1230 484,1275 498,1295 460,1297 390,1287 370,1288|498,1295 520,1297 550,1285 575,1268 575,1255 605,1247 610,1190 580,1170|610,1190 615,1230 635,1260 632,1280 622,1265 620,1245 605,1247|620,1210 655,1215 690,1203|575,1268 605,1285 605,1330 590,1355 560,1355 540,1335 520,1297|472,1300 472,1350 460,1350 460,1447 440,1455 420,1442|460,1385 475,1422 500,1405 525,1400 560,1355|590,1355 597,1385 597,1410 605,1410|597,1405 585,1410 583,1425 598,1428|545,1460 558,1450 565,1462 550,1478 541,1468 545,1460|472,1300 520,1297|137,462 162,462 155,500 155,535 138,548|218,437 245,448 270,455|263,290 300,312 327,325 320,355 305,375 312,390 318,420 325,430|270,288 300,290 303,318|310,240 315,265 300,290|335,215 348,210|398,232 402,280 405,292|405,292 375,308 385,330 410,340 430,330 445,320 425,298 405,292|312,365 345,360 355,378 335,390 312,390|345,360 385,362 388,340 425,338 428,355 415,375 390,380 355,375|428,350 450,342 490,345 485,330 445,322|415,375 430,390 460,388 490,352|460,220 497,225 500,270 505,290 490,325 445,322|490,352 535,350 560,370 572,400|465,390 490,420 498,432 550,430|535,350 558,345 570,375 560,395|498,432 490,470 545,468|390,380 388,398 420,395 435,400 455,395 465,390|415,405 440,450 455,440 450,410 415,405|455,395 475,440 492,445|455,455 480,460 490,475 468,490|500,280 560,282 590,285 590,245 600,240 585,195 550,190 530,210 500,230|473,180 520,178 535,190 530,210|510,142 548,150 552,185 540,190|550,100 548,150|590,285 595,270 618,268 640,300 685,320 685,345 668,370|460,212 490,208 495,222|690,437 730,445 760,470 780,475 785,510|705,460 735,480 740,505 735,540|715,470 760,480 745,505 760,515|641,553 700,545 735,540|735,540 755,575 750,590 775,630 778,660|640,610 700,590 712,545|640,620 675,608 740,665 778,670|632,665 660,650 655,630 675,620|720,835 780,835 830,812 855,805 862,765|825,812 832,840|815,745 860,762 872,725|840,545 870,528 920,555 920,600 930,660 945,700 932,727|830,475 850,480 890,455 912,470 930,475 980,525 1000,540 960,550 940,572 920,570|865,475 865,410 895,402 930,430 975,435 990,480 1010,480 1035,465 1065,455 1070,440 1135,455 1100,490 1065,505 1015,500|1000,540 1005,510 1015,500|785,380 780,350 762,345 765,315 785,305 815,278 865,298 910,295 912,270 925,232 965,225 1018,198 1065,240 1100,222 1135,290 1180,295 1215,325 1200,370 1170,370 1165,405 1140,410 1138,455|925,660 985,658 1015,630 1040,560 1080,545|1000,540 1035,530 1045,550 1070,545 1065,505 1080,520 1080,545|1005,740 1035,738 1020,700 1045,685 1080,620 1065,590 1110,572|1080,545 1110,572 1125,605 1125,635 1155,655 1230,685 1270,690 1320,665 1340,685 1345,715|1140,655 1135,675 1200,705 1230,708 1232,685|1238,685 1240,700 1270,700 1272,685|1230,708 1235,770|1235,715 1275,725 1270,780|1345,715 1345,745 1370,775 1360,790 1335,815 1340,860|1320,690 1300,700 1285,775 1275,780|1370,775 1380,765 1420,755 1445,765 1465,778|1372,780 1375,830 1415,822 1425,870 1390,880 1388,895|1380,765 1395,790 1415,800 1410,820 1445,860 1448,890 1420,910`;

const MapSvg = styled.svg`
  display: block;
  flex: none;
`;
const WorldMap = () => (
  <MapSvg width="1823" height="680" viewBox="0 0 1823 680" stroke="#a9a9a9" strokeWidth="1.5" strokeLinejoin="round">
    <g fill="#f1f1f1">{LANDS.map((d, i) => <polygon key={i} points={d} />)}</g>
    <g fill="#fff">{SEAS.map((d, i) => <polygon key={i} points={d} />)}</g>
    <g fill="none">
      {WIDE_BORDERS.split("|").map((d, i) => <polyline key={`w${i}`} points={W(d).join(" ")} />)}
      {DETAIL_BORDERS.split("|").map((d, i) => <polyline key={`d${i}`} points={D(d).join(" ")} />)}
    </g>
    <g fill="#cbaea7">{USA.map((d, i) => <polygon key={i} points={d} />)}</g>
    <polygon fill="#ff6640" points={BRAZIL} />
  </MapSvg>
);

/* ---------- data ---------- */
const FILTERS = [
  ["env", "dev", 87, true],
  ["geo", "us-east", 121, true],
  ["test", "ts_performance", 198, true],
  ["libxmtp", "*", 98, false],
  ["operation", "*", 115, false],
  ["metric_type", "*", 131, false],
  ["members", "*", 114, false],
];
const TILES = [
  ["Server Call Average (ms)", "140.61", "#fb9d03", 147],
  ["TLS Handshake Average (ms)", "109.47", "#fb9d03", 147],
  ["Processing Average (ms)", "31.11", "#42c463", 197],
  ["Top operation by duration (ms)", "9.92k", "#ed374b", 197],
  ["Group Creation Average (ms)", "4.65k", "#ed374b", 197],
  ["Message Delivery Average (ms)", "135.32", "#fb9d03", 147],
];
const range = (n, step) => Array.from({ length: n + 1 }, (_, i) => i * step);
const kilo = (v) => (v ? `${v}k` : "0");
const cycle = [C.blue, C.purple, C.gold, C.sky, C.lilac, C.sand];

const Legend = ({ names, more }) => (
  <LegendRow>
    {names.map((n, i) => (
      <LegendItem key={n}><Swatch $c={cycle[i % 6]} />{n}</LegendItem>
    ))}
    {more && <More>{more}</More>}
  </LegendRow>
);

export default function App() {
  return (
    <Desktop>
      <Global />
      <Bezel>
        <Screen>
          <Sidebar>
            <LogoSlot><Logo /></LogoSlot>
            <NavItem>{icons.search}</NavItem>
            <NavRule />
            <NavItem>{icons.history}</NavItem>
            <NavItem $active>{icons.chart}</NavItem>
            {["target", "binoc", "stack", "flow"].map((k) => <NavItem key={k}>{icons[k]}</NavItem>)}
            <NavRule />
            {["hex", "cloud", "lines", "boxes", "link", "shield", "ai"].map((k) => <NavItem key={k}>{icons[k]}</NavItem>)}
            <NavRule />
            {["bug", "gauge", "logs"].map((k) => <NavItem key={k}>{icons[k]}</NavItem>)}
            <Spacer />
            <NavItem>{icons.puzzle}</NavItem>
            <NavItem><Avatar /></NavItem>
            <HelpBox>
              <Icon s={20} w={17} vb="0 0 17 20" sw="1.8"><path d="M1.5 6 C1.5 2.5 4 1 8.5 1 C13 1 15.5 3 15.5 6 C15.5 10 8.3 9.5 8.3 13.5 V15" /><path d="M8.3 17.5 V20" strokeWidth="2.6" /></Icon>
              <HelpLabel>Help</HelpLabel>
            </HelpBox>
          </Sidebar>
          <Main>
            <Header>
              <HeaderRow $h={44}>
                <Icon s={28} vb="0 0 28 28"><path d="M14 1.5 L17.8 9.6 L26.6 10.7 L20.2 16.9 L21.8 25.7 L14 21.4 L6.2 25.7 L7.8 16.9 L1.4 10.7 L10.2 9.6Z" fill="#fc0" stroke="#fc0" strokeLinejoin="round" /></Icon>
                <Title>XMTP SDK Performance</Title>
                <ChevronSlot><Icon s={16} sw="2.4"><path d="M1 7 L12 18 L23 7" stroke="#6c757a" /></Icon></ChevronSlot>
                <Pill><Dot />Shared</Pill>
                <Spacer />
                <Ghost $mr={47}><ShareIcon s={21} />Share</Ghost>
                <Ghost $mr={48}>
                  <Icon s={24} sw="2"><path d="M12 2 L20.5 7.5 L12 13 L3.5 7.5Z M7 12.8 L3.5 16 L12 22 L20.5 16 L17 12.8" /></Icon>
                  Show Overlays
                </Ghost>
                <Ghost $mr={30}>
                  <Icon s={22}><path {...solid} fillRule="evenodd" d="M9.5 1 H14.5 L15.3 4.3 L17.5 5.5 L20.8 4.6 L23.2 8.8 L20.8 11 V13 L23.2 15.2 L20.8 19.4 L17.5 18.5 L15.3 19.7 L14.5 23 H9.5 L8.7 19.7 L6.5 18.5 L3.2 19.4 L0.8 15.2 L3.2 13 V11 L0.8 8.8 L3.2 4.6 L6.5 5.5 L8.7 4.3Z M12 8 A4 4 0 1 0 12 16 A4 4 0 1 0 12 8Z" /></Icon>
                  Configure
                </Ghost>
                <Primary>
                  <Icon s={20} sw="4"><path d="M12 0 V24 M0 12 H24" /></Icon>
                  Add Widgets
                </Primary>
              </HeaderRow>
              <HeaderRow $h={42} $mt={19.5}>
                <Filter $w={165}>Saved Views<Caret /></Filter>
                {FILTERS.map(([k, v, w, on]) => (
                  <Filter key={k} $w={w} $on={on}>
                    <Legendlet>{k}</Legendlet>
                    {v}
                    <Caret $c={on ? "#006bc2" : undefined} />
                  </Filter>
                ))}
                <Spacer />
                <TimeBox>
                  <Legendlet $x={82} $s={15}>UTC-03:00</Legendlet>
                  <Chip>4h</Chip>
                  Past 4 Hours
                  <Spacer />
                  <PinSlot>
                    <Icon s={19} w={16} vb="0 0 16 19" sw="1.6"><path d="M2 1 H14 M4 1 V9 L1 12.5 H15 L12 9 V1 M8 12.5 V19" stroke="#6c757a" /></Icon>
                  </PinSlot>
                  <Caret />
                </TimeBox>
                <Playback>
                  <PlayCell><Icon s={20} w={20}><path {...solid} d="M12 2 V22 L1 12Z M23 2 V22 L12 12Z" /></Icon></PlayCell>
                  <PlayCell $bg="#006bc9" $c="#fff"><Icon s={24}><path d="M6.8 1 V23 M17.2 1 V23" strokeWidth="5" /></Icon></PlayCell>
                  <PlayCell $bg="#f7f8fa" $c="#b2b6b9"><Icon s={20} w={20}><path {...solid} d="M1 2 V22 L12 12Z M12 2 V22 L23 12Z" /></Icon></PlayCell>
                </Playback>
                <SquareButton>
                  <Icon s={22} sw="2"><circle cx="10.5" cy="10.5" r="8.5" /><path d="M6.5 10.5 H14.5 M17 17 L22.5 23" /></Icon>
                </SquareButton>
              </HeaderRow>
            </Header>
            <Board>
              {TILES.map(([name, value, bg, size], i) => (
                <Tile key={name} $bg={bg}>
                  <TileHead>
                    {name}
                    {i === 3 && (
                      <TileTools>
                        <Icon s={18} sw="2"><path d="M1 8 V1 H8 M1 1 L9 9 M16 1 H23 V8 M23 1 L15 9 M1 16 V23 H8 M1 23 L9 15 M16 23 H23 V16 M23 23 L15 15" /></Icon>
                        <ShareIcon s={19} />
                        <Icon s={19} sw="2"><path d="M2 22 L4 15 L17 2 L22 7 L9 20 L2 22 M14 5 L19 10 M12 22.5 H24" /></Icon>
                        <Icon s={22} w={6} vb="0 0 6 22"><path {...solid} d="M3 .5a2.6 2.6 0 1 0 .01 0z M3 8.4a2.6 2.6 0 1 0 .01 0z M3 16.3a2.6 2.6 0 1 0 .01 0z" /></Icon>
                      </TileTools>
                    )}
                  </TileHead>
                  <TileValue $size={size}>{value}</TileValue>
                  {i === 3 && <><Corner $left $b={9} /><Corner $b={5} /></>}
                </Tile>
              ))}
              <Panel>
                <PanelHead>Network Performance</PanelHead>
                <Chart ticks={range(7, 50)} max={350} series={network} label={(v) => v} />
                <Legend names={["dns_lookup", "processing", "server_call", "tcp_connection", "tls_handshake", "total_time"]} />
              </Panel>
              <Panel>
                <PanelHead>SDK Operations Performance</PanelHead>
                <Chart ticks={range(11, 1)} max={11} series={sdk} label={kilo} />
                <Legend names={["createdm", "creategroup", "creategroupbyidentifiers", "inboxstate", "receivegm", "receivegroupmessage", "removemembers", "sendgm", "sendgroupmessage", "syncgroup"]} more="+1" />
              </Panel>
              <Panel $tall>
                <PanelHead>Xmtp sdk performance by country</PanelHead>
                <WorldMap />
                <ZoomBox>
                  <Icon s={18} sw="2.4"><path d="M12 1 V23 M1 12 H23" /></Icon>
                  <Icon s={18} sw="2.4"><path d="M2 12 H22" stroke="#b4b8bb" /></Icon>
                </ZoomBox>
              </Panel>
              <Panel>
                <PanelHead>Group operations by size</PanelHead>
                <Chart ticks={range(15, 2)} max={30} series={groups} label={kilo} />
                <Legend names={["50", "100", "150", "200", "250", "300", "350", "400"]} />
              </Panel>
              <Panel>
                <PanelHead>Core SDK operations performance</PanelHead>
              </Panel>
            </Board>
          </Main>
        </Screen>
      </Bezel>
    </Desktop>
  );
}
